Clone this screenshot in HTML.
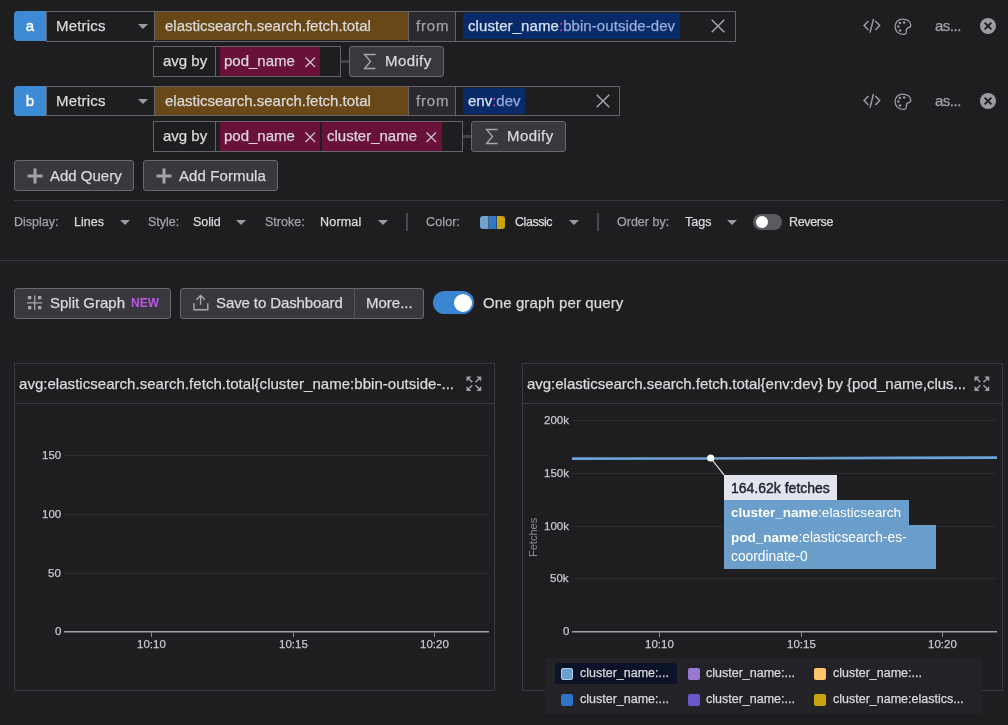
<!DOCTYPE html>
<html><head><meta charset="utf-8">
<style>
*{box-sizing:border-box;margin:0;padding:0}
html,body{width:1008px;height:725px;overflow:hidden;background:#1e1e21;font-family:"Liberation Sans",sans-serif;color:#dbd9dc}
.t,.sm,.ax{-webkit-text-stroke:0.25px currentColor}
div{will-change:transform}
.a{position:absolute}
.t{position:absolute;white-space:nowrap;font-size:15px;line-height:18px}
.box{position:absolute;border:1px solid #66636a}
.btn{position:absolute;border:1px solid #6b696f;background:#3a383e;border-radius:3px}
.badge{position:absolute;background:#3c8bd4;border-radius:4px 0 0 4px;color:#fff;font-size:15px;text-align:center;-webkit-text-stroke:0.4px #fff}
.brown{position:absolute;background:#684816}
.pink{position:absolute;background:#6a1139}
.blue{position:absolute;background:#092a68}
.fromb{position:absolute;background:#2b2b2f}
.sm{position:absolute;white-space:nowrap;font-size:12.5px;line-height:16px}
.grey{color:#a3a2a7}
.tri{position:absolute;width:0;height:0;border-left:5px solid transparent;border-right:5px solid transparent;border-top:5px solid #9c9ba1}
.hl{position:absolute;height:1px;background:#3a393f}
.vl{position:absolute;width:1px;background:#3a393f}
svg{position:absolute;overflow:visible}
.ax{position:absolute;white-space:nowrap;font-size:11.5px;line-height:14px;color:#c9c8cd}
</style></head><body>

<!-- ROW A -->
<div class="badge" style="left:14px;top:11px;width:32px;height:30px;line-height:30px">a</div>
<div class="box" style="left:46px;top:11px;width:690px;height:31px"></div>
<div class="t" style="left:55.5px;top:17px;letter-spacing:0.2px">Metrics</div>
<div class="tri" style="left:138px;top:24px"></div>
<div class="a" style="left:154px;top:11px;width:1px;height:31px;background:#66636a"></div>
<div class="brown" style="left:155px;top:12px;width:253px;height:28px"></div>
<div class="t" style="left:164.8px;top:17px">elasticsearch.search.fetch.total</div>
<div class="fromb" style="left:408px;top:12px;width:48px;height:29px;border-left:1px solid #66636a;border-right:1px solid #66636a"></div>
<div class="t grey" style="left:416px;top:17px;letter-spacing:0.8px">from</div>
<div class="blue" style="left:463px;top:13px;width:217px;height:26px"></div>
<div class="t" style="left:468px;top:17px;letter-spacing:0.07px"><span style="color:#d8e2f4">cluster_name</span><span style="color:#d03aa8">:</span><span style="color:#98acd8">bbin-outside-dev</span></div>
<svg style="left:711px;top:19px" width="14" height="14"><path d="M0.7 0.7L13.3 13.3M13.3 0.7L0.7 13.3" stroke="#a9a8ae" stroke-width="1.4"/></svg>

<!-- ROW A SUB -->
<div class="box" style="left:153px;top:46px;width:188px;height:31px"></div>
<div class="t" style="left:163.2px;top:52px">avg by</div>
<div class="a" style="left:215px;top:46px;width:1px;height:31px;background:#66636a"></div>
<div class="pink" style="left:220px;top:47px;width:100px;height:29px"></div>
<div class="t" style="left:224px;top:52px">pod_name</div>
<svg style="left:304.5px;top:56.5px" width="11" height="11"><path d="M0.5 0.5L10 10M10 0.5L0.5 10" stroke="#d0cfd4" stroke-width="1.1"/></svg>
<div class="a" style="left:341px;top:60px;width:8px;height:3px;background:#434248"></div>
<div class="btn" style="left:349px;top:46px;width:95px;height:31px"></div>
<svg style="left:363px;top:53px" width="14" height="17"><path d="M12.5 1.5H1.5L7.5 8.5L1.5 15.5H12.5" stroke="#a9a8ae" stroke-width="1.3" fill="none"/></svg>
<div class="t" style="left:385px;top:52px;letter-spacing:0.4px">Modify</div>

<!-- icons right row a -->
<svg style="left:862px;top:18px" width="20" height="16"><path d="M6.4 3.1L2.1 7.6L6.4 12.1M13.3 3.1L17.7 7.6L13.3 12.1M11.5 1L8 14.6" stroke="#9c9ba1" stroke-width="1.5" fill="none"/></svg>
<svg style="left:894px;top:17.6px" width="18" height="18"><path d="M8.6 1.1C4.3 1.1 1.1 4.4 1.1 8.6C1.1 12.9 4.5 16.4 8.8 16.4C11.4 16.4 12.4 15.5 12.3 13.5C12.2 11.6 12.4 10.1 14 9.8C15.8 9.5 16.8 8.7 16.8 7.2C16.8 3.6 13.2 1.1 8.6 1.1Z" stroke="#9c9ba1" stroke-width="1.3" fill="none"/><circle cx="5.9" cy="5.1" r="1.25" fill="#9c9ba1"/><circle cx="10.1" cy="4.5" r="1.25" fill="#9c9ba1"/><circle cx="4.3" cy="8.6" r="1.25" fill="#9c9ba1"/><circle cx="6.1" cy="12.4" r="1.25" fill="#9c9ba1"/></svg>
<div class="t grey" style="left:934.8px;top:17px;letter-spacing:-0.5px">as...</div>
<svg style="left:980px;top:18px" width="16" height="16"><circle cx="8" cy="8" r="8" fill="#9c9ba1"/><path d="M4.6 4.6L11.4 11.4M11.4 4.6L4.6 11.4" stroke="#1e1e21" stroke-width="1.9"/></svg>

<!-- ROW B -->
<div class="badge" style="left:14px;top:86px;width:32px;height:30px;line-height:30px">b</div>
<div class="box" style="left:46px;top:86px;width:574px;height:30px"></div>
<div class="t" style="left:55.5px;top:92px;letter-spacing:0.2px">Metrics</div>
<div class="tri" style="left:138px;top:99px"></div>
<div class="a" style="left:154px;top:86px;width:1px;height:30px;background:#66636a"></div>
<div class="brown" style="left:155px;top:87px;width:253px;height:28px"></div>
<div class="t" style="left:164.8px;top:92px">elasticsearch.search.fetch.total</div>
<div class="fromb" style="left:408px;top:87px;width:48px;height:28px;border-left:1px solid #66636a;border-right:1px solid #66636a"></div>
<div class="t grey" style="left:416px;top:92px;letter-spacing:0.8px">from</div>
<div class="blue" style="left:463px;top:88px;width:62px;height:26px"></div>
<div class="t" style="left:468px;top:92px"><span style="color:#d8e2f4">env</span><span style="color:#d03aa8">:</span><span style="color:#98acd8">dev</span></div>
<svg style="left:596px;top:94px" width="14" height="14"><path d="M0.7 0.7L13.3 13.3M13.3 0.7L0.7 13.3" stroke="#a9a8ae" stroke-width="1.4"/></svg>

<!-- ROW B SUB -->
<div class="box" style="left:153px;top:121px;width:310px;height:31px"></div>
<div class="t" style="left:163.2px;top:127px">avg by</div>
<div class="a" style="left:215px;top:121px;width:1px;height:31px;background:#66636a"></div>
<div class="pink" style="left:220px;top:122px;width:100px;height:29px"></div>
<div class="t" style="left:224px;top:127px">pod_name</div>
<svg style="left:304.5px;top:131.5px" width="11" height="11"><path d="M0.5 0.5L10 10M10 0.5L0.5 10" stroke="#d0cfd4" stroke-width="1.1"/></svg>
<div class="pink" style="left:322px;top:122px;width:120px;height:29px"></div>
<div class="t" style="left:327px;top:127px">cluster_name</div>
<svg style="left:425.5px;top:131.5px" width="11" height="11"><path d="M0.5 0.5L10 10M10 0.5L0.5 10" stroke="#d0cfd4" stroke-width="1.1"/></svg>
<div class="a" style="left:463px;top:135px;width:8px;height:3px;background:#434248"></div>
<div class="btn" style="left:471px;top:121px;width:95px;height:31px"></div>
<svg style="left:485px;top:128px" width="14" height="17"><path d="M12.5 1.5H1.5L7.5 8.5L1.5 15.5H12.5" stroke="#a9a8ae" stroke-width="1.3" fill="none"/></svg>
<div class="t" style="left:507px;top:127px;letter-spacing:0.4px">Modify</div>

<!-- icons right row b -->
<svg style="left:862px;top:93px" width="20" height="16"><path d="M6.4 3.1L2.1 7.6L6.4 12.1M13.3 3.1L17.7 7.6L13.3 12.1M11.5 1L8 14.6" stroke="#9c9ba1" stroke-width="1.5" fill="none"/></svg>
<svg style="left:894px;top:92.6px" width="18" height="18"><path d="M8.6 1.1C4.3 1.1 1.1 4.4 1.1 8.6C1.1 12.9 4.5 16.4 8.8 16.4C11.4 16.4 12.4 15.5 12.3 13.5C12.2 11.6 12.4 10.1 14 9.8C15.8 9.5 16.8 8.7 16.8 7.2C16.8 3.6 13.2 1.1 8.6 1.1Z" stroke="#9c9ba1" stroke-width="1.3" fill="none"/><circle cx="5.9" cy="5.1" r="1.25" fill="#9c9ba1"/><circle cx="10.1" cy="4.5" r="1.25" fill="#9c9ba1"/><circle cx="4.3" cy="8.6" r="1.25" fill="#9c9ba1"/><circle cx="6.1" cy="12.4" r="1.25" fill="#9c9ba1"/></svg>
<div class="t grey" style="left:934.8px;top:92px;letter-spacing:-0.5px">as...</div>
<svg style="left:980px;top:93px" width="16" height="16"><circle cx="8" cy="8" r="8" fill="#9c9ba1"/><path d="M4.6 4.6L11.4 11.4M11.4 4.6L4.6 11.4" stroke="#1e1e21" stroke-width="1.9"/></svg>

<!-- ADD BUTTONS -->
<div class="btn" style="left:14px;top:160px;width:120px;height:31px"></div>
<svg style="left:26.7px;top:167.6px" width="16" height="16"><path d="M8 0.5V15.5M0.5 8H15.5" stroke="#a5a4aa" stroke-width="3"/></svg>
<div class="t" style="left:50px;top:167px">Add Query</div>
<div class="btn" style="left:143px;top:160px;width:135px;height:31px"></div>
<svg style="left:155.7px;top:167.6px" width="16" height="16"><path d="M8 0.5V15.5M0.5 8H15.5" stroke="#a5a4aa" stroke-width="3"/></svg>
<div class="t" style="left:179px;top:167px;letter-spacing:0.1px">Add Formula</div>

<div class="hl" style="left:14px;top:200px;width:989px"></div>

<!-- DISPLAY ROW -->
<div class="sm grey" style="left:14px;top:213.5px">Display:</div>
<div class="sm" style="left:74px;top:213.5px">Lines</div>
<div class="tri" style="left:120px;top:220px"></div>
<div class="sm grey" style="left:148px;top:213.5px">Style:</div>
<div class="sm" style="left:193px;top:213.5px">Solid</div>
<div class="tri" style="left:236px;top:220px"></div>
<div class="sm grey" style="left:265px;top:213.5px">Stroke:</div>
<div class="sm" style="left:320px;top:213.5px;letter-spacing:0.2px">Normal</div>
<div class="tri" style="left:378px;top:220px"></div>
<div class="vl" style="left:405.5px;top:213px;width:1.5px;height:18px;background:#48474d"></div>
<div class="sm grey" style="left:426px;top:213.5px;letter-spacing:0.15px">Color:</div>
<svg style="left:480px;top:216px" width="26" height="13"><path d="M3 0H8.5V13H3A3 3 0 0 1 0 10V3A3 3 0 0 1 3 0Z" fill="#6fa3d2"/><rect x="9" y="0" width="7.5" height="13" fill="#3178c9"/><path d="M17 0H22A3 3 0 0 1 25 3V10A3 3 0 0 1 22 13H17Z" fill="#cca40c"/></svg>
<div class="sm" style="left:515px;top:213.5px;letter-spacing:-0.45px">Classic</div>
<div class="tri" style="left:569px;top:220px"></div>
<div class="vl" style="left:596.5px;top:213px;width:1.5px;height:18px;background:#48474d"></div>
<div class="sm grey" style="left:617px;top:213.5px">Order by:</div>
<div class="sm" style="left:685px;top:213.5px">Tags</div>
<div class="tri" style="left:727px;top:220px"></div>
<div class="a" style="left:753px;top:214px;width:29px;height:16px;border-radius:8px;background:#5b5a60"></div>
<div class="a" style="left:756px;top:216px;width:12px;height:12px;border-radius:6px;background:#fff"></div>
<div class="sm" style="left:789px;top:213.5px;letter-spacing:-0.35px">Reverse</div>

<div class="hl" style="left:0px;top:260px;width:1008px"></div>

<!-- TOOLBAR -->
<div class="btn" style="left:14px;top:288px;width:157px;height:31px"></div>
<svg style="left:27px;top:295px" width="16" height="16"><path d="M7.7 0.5V15M0 7.8H15.3" stroke="#a9a8ae" stroke-width="1.3"/><rect x="1" y="1" width="3.3" height="3.3" fill="#a9a8ae"/><rect x="11" y="1" width="3.3" height="3.3" fill="#a9a8ae"/><rect x="1" y="11" width="3.3" height="3.3" fill="#a9a8ae"/><rect x="11" y="11" width="3.3" height="3.3" fill="#a9a8ae"/></svg>
<div class="t" style="left:50px;top:294px">Split Graph</div>
<div class="a" style="left:131px;top:296px;font-size:12px;line-height:14px;font-weight:bold;color:#b65ae6">NEW</div>
<div class="btn" style="left:180px;top:288px;width:244px;height:31px"></div>
<div class="a" style="left:354px;top:288px;width:1px;height:31px;background:#56555b"></div>
<svg style="left:193px;top:294px" width="16" height="17"><path d="M7.6 10.8V1.5M3.3 5.8L7.6 1.5L11.9 5.8M1 9.2V15.8H14.8V9.2" stroke="#a9a8ae" stroke-width="1.4" fill="none"/></svg>
<div class="t" style="left:216px;top:294px;letter-spacing:-0.1px">Save to Dashboard</div>
<div class="t" style="left:366px;top:294px">More...</div>
<div class="a" style="left:433px;top:291px;width:41px;height:23px;border-radius:12px;background:#3a86d2"></div>
<div class="a" style="left:453.5px;top:293.5px;width:18px;height:18px;border-radius:9px;background:#fff"></div>
<div class="t" style="left:483px;top:294px;letter-spacing:0.1px">One graph per query</div>

<!-- LEFT PANEL -->
<div class="box" style="left:14px;top:363px;width:481px;height:328px;border-color:#3a393f"></div>
<div class="hl" style="left:15px;top:403px;width:479px"></div>
<div class="t" style="left:19px;top:375px;letter-spacing:0.035px">avg:elasticsearch.search.fetch.total{cluster_name:bbin-outside-...</div>
<svg style="left:466.3px;top:376px" width="16" height="16"><path d="M0.5 0.5H5.5L0.5 5.5ZM15.3 0.5V5.5L10.3 0.5ZM0.5 15V10L5.5 15ZM15.3 15H10.3L15.3 10Z" fill="#9f9ea4"/><path d="M2 2L6.3 6.3M13.8 2L9.5 6.3M2 13.5L6.3 9.2M13.8 13.5L9.5 9.2" stroke="#9f9ea4" stroke-width="1.5"/></svg>
<div class="hl" style="left:64px;top:455px;width:425px;background:#2c2c2e"></div>
<div class="hl" style="left:64px;top:514px;width:425px;background:#2c2c2e"></div>
<div class="hl" style="left:64px;top:573px;width:425px;background:#2c2c2e"></div>
<div class="hl" style="left:64px;top:631px;width:425px;height:1px;background:#a3a2a7"></div><div class="hl" style="left:64px;top:632px;width:425px;height:1px;background:#5e5d62"></div>
<div class="ax" style="left:42px;top:448px">150</div>
<div class="ax" style="left:42px;top:507px">100</div>
<div class="ax" style="left:48px;top:566px">50</div>
<div class="ax" style="left:55px;top:624px">0</div>
<div class="vl" style="left:151px;top:632px;height:5px;background:#8e8d93"></div>
<div class="vl" style="left:293px;top:632px;height:5px;background:#8e8d93"></div>
<div class="vl" style="left:434px;top:632px;height:5px;background:#8e8d93"></div>
<div class="ax" style="left:137px;top:637px">10:10</div>
<div class="ax" style="left:279px;top:637px">10:15</div>
<div class="ax" style="left:420px;top:637px">10:20</div>

<!-- RIGHT PANEL -->
<div class="box" style="left:522px;top:363px;width:481px;height:328px;border-color:#3a393f"></div>
<div class="hl" style="left:523px;top:403px;width:479px"></div>
<div class="t" style="left:527px;top:375px;letter-spacing:-0.02px">avg:elasticsearch.search.fetch.total{env:dev} by {pod_name,clus...</div>
<svg style="left:974.3px;top:376px" width="16" height="16"><path d="M0.5 0.5H5.5L0.5 5.5ZM15.3 0.5V5.5L10.3 0.5ZM0.5 15V10L5.5 15ZM15.3 15H10.3L15.3 10Z" fill="#9f9ea4"/><path d="M2 2L6.3 6.3M13.8 2L9.5 6.3M2 13.5L6.3 9.2M13.8 13.5L9.5 9.2" stroke="#9f9ea4" stroke-width="1.5"/></svg>
<div class="hl" style="left:572px;top:420px;width:425px;background:#2c2c2e"></div>
<div class="hl" style="left:572px;top:473px;width:425px;background:#2c2c2e"></div>
<div class="hl" style="left:572px;top:526px;width:425px;background:#2c2c2e"></div>
<div class="hl" style="left:572px;top:578px;width:425px;background:#2c2c2e"></div>
<div class="hl" style="left:572px;top:631px;width:425px;height:1px;background:#a3a2a7"></div><div class="hl" style="left:572px;top:632px;width:425px;height:1px;background:#5e5d62"></div>
<div class="ax" style="left:544px;top:413px">200k</div>
<div class="ax" style="left:544px;top:466px">150k</div>
<div class="ax" style="left:544px;top:519px">100k</div>
<div class="ax" style="left:550px;top:571px">50k</div>
<div class="ax" style="left:563px;top:624px">0</div>
<div class="a" style="left:527px;top:557px;font-size:11px;line-height:12px;color:#8e8d93;transform:rotate(-90deg);transform-origin:0 0;white-space:nowrap">Fetches</div>
<div class="vl" style="left:659px;top:632px;height:5px;background:#8e8d93"></div>
<div class="vl" style="left:801px;top:632px;height:5px;background:#8e8d93"></div>
<div class="vl" style="left:942px;top:632px;height:5px;background:#8e8d93"></div>
<div class="ax" style="left:645px;top:637px">10:10</div>
<div class="ax" style="left:787px;top:637px">10:15</div>
<div class="ax" style="left:928px;top:637px">10:20</div>
<svg style="left:0;top:0" width="1008" height="725"><path d="M572 458.6L700 458.5L800 458.2L900 457.9L997 457.6" stroke="#6ca2d6" stroke-width="2.6" fill="none"/></svg>
<svg style="left:700px;top:450px" width="30" height="30"><path d="M10.7 8L24 24.8" stroke="#e8e8ee" stroke-width="1.2"/><circle cx="10.7" cy="8" r="3.6" fill="#fff"/></svg>
<!-- tooltip -->
<div class="a" style="left:724px;top:475px;width:113px;height:25px;background:#e3e5ee"></div>
<div class="a" style="left:731px;top:479.5px;font-size:14px;line-height:16px;-webkit-text-stroke:0.45px #1f2330;color:#1f2330;white-space:nowrap">164.62k fetches</div>
<div class="a" style="left:724px;top:500px;width:185px;height:25px;background:#6b9ecb"></div>
<div class="a" style="left:731px;top:505px;font-size:13.6px;line-height:15px;color:#fff;white-space:nowrap"><b style="font-size:13.5px">cluster_name</b>:elasticsearch</div>
<div class="a" style="left:724px;top:525px;width:212px;height:44px;background:#6b9ecb"></div>
<div class="a" style="left:731px;top:528px;font-size:13.8px;line-height:19px;color:#fff;white-space:nowrap"><b style="font-size:13.5px">pod_name</b>:elasticsearch-es-<br>coordinate-0</div>

<!-- legend -->
<div class="a" style="left:545px;top:658px;width:437px;height:56px;background:#232327;border-radius:2px"></div>
<div class="a" style="left:555px;top:663px;width:122px;height:21px;background:#0a1327;border-radius:3px"></div>
<div class="a" style="left:561px;top:668px;width:12px;height:12px;background:#6c9fd1;border:1.5px solid #b3cdea;border-radius:2px"></div>
<div class="sm" style="left:580px;top:665px">cluster_name:...</div>
<div class="a" style="left:688px;top:668px;width:12px;height:12px;background:#9a7ad0;border-radius:2px"></div>
<div class="sm" style="left:706px;top:665px">cluster_name:...</div>
<div class="a" style="left:814px;top:668px;width:12px;height:12px;background:#fdc66b;border-radius:2px"></div>
<div class="sm" style="left:833px;top:665px">cluster_name:...</div>
<div class="a" style="left:561px;top:694px;width:12px;height:12px;background:#2f74c8;border-radius:2px"></div>
<div class="sm" style="left:580px;top:691px">cluster_name:...</div>
<div class="a" style="left:688px;top:694px;width:12px;height:12px;background:#6a58c8;border-radius:2px"></div>
<div class="sm" style="left:706px;top:691px">cluster_name:...</div>
<div class="a" style="left:814px;top:694px;width:12px;height:12px;background:#c9a20f;border-radius:2px"></div>
<div class="sm" style="left:833px;top:691px">cluster_name:elastics...</div>

</body></html>
